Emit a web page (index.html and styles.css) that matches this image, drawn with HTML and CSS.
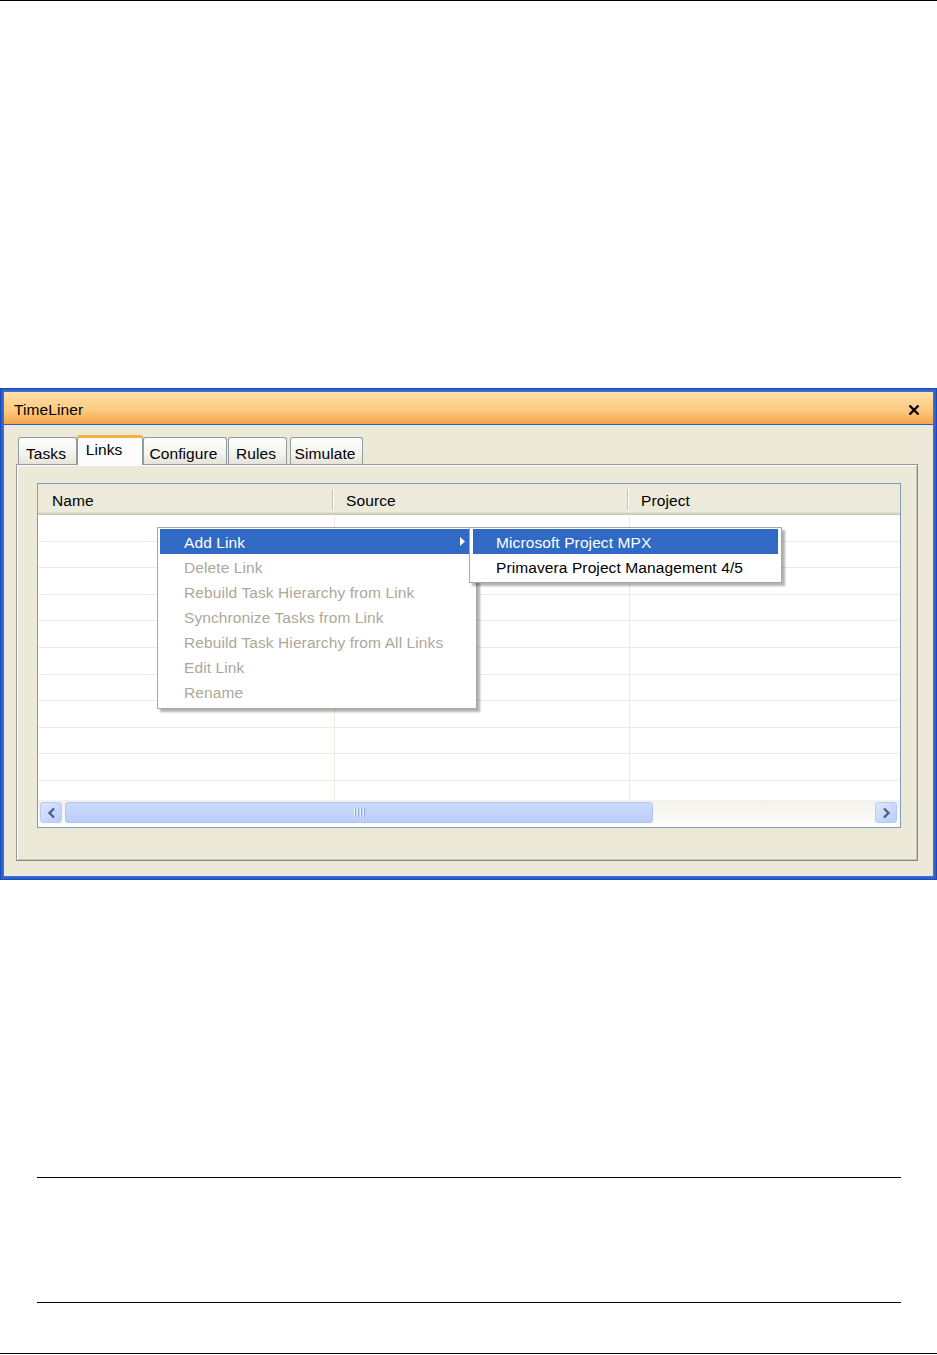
FILE: index.html
```html
<!DOCTYPE html>
<html>
<head>
  <meta charset="UTF-8">
  <title>TimeLiner - Links</title>
  <link rel="stylesheet" href="styles.css">
</head>
<body>
  <div class="page-rule"></div>

  <div class="figure">
    <div class="window">
      <div class="titlebar">
        <span class="title">TimeLiner</span>
        <svg class="close" width="12" height="12" viewBox="0 0 12 12">
          <path d="M1.5 1.5 L10.5 10.5 M10.5 1.5 L1.5 10.5" stroke="#000" stroke-width="2.4" fill="none"/>
        </svg>
      </div>

      <div class="win-body">
        <div class="tabs">
          <div class="tab tab-tasks">Tasks</div>
          <div class="tab tab-links active">Links</div>
          <div class="tab tab-configure">Configure</div>
          <div class="tab tab-rules">Rules</div>
          <div class="tab tab-simulate">Simulate</div>
        </div>

        <div class="tab-panel">
          <div class="listview">
            <div class="lv-header">
              <div class="lv-col col-name">Name</div>
              <div class="lv-col col-source">Source</div>
              <div class="lv-col col-project">Project</div>
            </div>

            <div class="lv-body">
              <div class="lv-row"><div></div><div></div><div></div></div>
              <div class="lv-row"><div></div><div></div><div></div></div>
              <div class="lv-row"><div></div><div></div><div></div></div>
              <div class="lv-row"><div></div><div></div><div></div></div>
              <div class="lv-row"><div></div><div></div><div></div></div>
              <div class="lv-row"><div></div><div></div><div></div></div>
              <div class="lv-row"><div></div><div></div><div></div></div>
              <div class="lv-row"><div></div><div></div><div></div></div>
              <div class="lv-row"><div></div><div></div><div></div></div>
              <div class="lv-row"><div></div><div></div><div></div></div>
              <div class="lv-row"><div></div><div></div><div></div></div>
            </div>

            <div class="hscroll">
              <div class="sb-btn">
                <svg width="9" height="12" viewBox="0 0 9 12"><path d="M7 1.5 L2.5 6 L7 10.5" stroke="#4D6185" stroke-width="2.4" fill="none"/></svg>
              </div>
              <div class="sb-thumb">
                <svg width="12" height="9" viewBox="0 0 12 9">
                  <path d="M1.5 0 V9 M4.5 0 V9 M7.5 0 V9 M10.5 0 V9" stroke="#EEF3FF" stroke-width="1"/>
                  <path d="M2.5 0 V9 M5.5 0 V9 M8.5 0 V9 M11.5 0 V9" stroke="#8CA8E8" stroke-width="1"/>
                </svg>
              </div>
              <div class="sb-track"></div>
              <div class="sb-btn">
                <svg width="9" height="12" viewBox="0 0 9 12"><path d="M2 1.5 L6.5 6 L2 10.5" stroke="#4D6185" stroke-width="2.4" fill="none"/></svg>
              </div>
            </div>

            <!-- context menu opened over the list -->
            <div class="ctx-menu">
              <div class="menu-item highlight">Add Link
                <svg class="sub-arrow" width="5" height="9" viewBox="0 0 5 9"><path d="M0 0 L5 4.5 L0 9 Z" fill="#fff"/></svg>
              </div>
              <div class="menu-item">Delete Link</div>
              <div class="menu-item">Rebuild Task Hierarchy from Link</div>
              <div class="menu-item">Synchronize Tasks from Link</div>
              <div class="menu-item">Rebuild Task Hierarchy from All Links</div>
              <div class="menu-item">Edit Link</div>
              <div class="menu-item">Rename</div>
            </div>

            <div class="ctx-menu submenu">
              <div class="menu-item highlight">Microsoft Project MPX</div>
              <div class="menu-item enabled">Primavera Project Management 4/5</div>
            </div>
          </div>
        </div>
      </div>
    </div>
  </div>

  <div class="footer">
    <div class="rule"></div>
    <div class="rule"></div>
  </div>

  <div class="page-rule bottom"></div>
</body>
</html>
```

FILE: styles.css
```css
body {
  margin: 0;
  background: #ffffff;
  font-family: 'Liberation Sans', Arial, sans-serif;
  color: #000000;
}

.page-rule {
  height: 1px;
  background: #000000;
}

.page-rule.bottom {
  margin-top: 50px;
}

.figure {
  margin-top: 387px;
}

/* XP style window frame */
.window {
  height: 492px;
  box-sizing: border-box;
  border: 1px solid #1B49B3;
  padding: 3px;
  background: #3C70D9;
  box-shadow: inset 0 0 0 2px #2E62D2;
}

.titlebar {
  height: 33px;
  box-sizing: border-box;
  border-bottom: 1px solid #2C5CC6;
  background: linear-gradient(to bottom, #FFE0A6, #FDCB82 55%, #F6A44A);
  display: flex;
  align-items: center;
  justify-content: space-between;
  padding: 3px 13px 0 10px;
  font-size: 15.5px;
  letter-spacing: 0.1px;
}

.win-body {
  height: 451px;
  box-sizing: border-box;
  background: #ECE9D8;
  padding: 10px 15px 0 12px;
}

.tabs {
  display: flex;
  align-items: flex-end;
  height: 29px;
  padding-left: 2px;
}

.tab {
  height: 27px;
  box-sizing: border-box;
  border: 1px solid #919B9C;
  border-bottom: none;
  border-radius: 3px 3px 0 0;
  background: linear-gradient(to bottom, #FFFFFF, #F4F3EE 60%, #E5E3D9);
  font-size: 15.5px;
  letter-spacing: 0.1px;
  text-align: center;
  padding: 7px 3px 0 0;
}

.tab.active {
  height: 30px;
  margin-bottom: -1px;
  position: relative;
  z-index: 1;
  background: #FCFCFE;
  border-top: 3px solid #F7B23C;
  padding: 3px 12px 0 0;
}

.tab-tasks { width: 59px; }
.tab-links { width: 66px; }
.tab-configure { width: 84px; }
.tab-rules { width: 59px; margin-left: 1px; }
.tab-simulate { width: 73px; margin-left: 3px; }

.tab-panel {
  height: 397px;
  box-sizing: border-box;
  border: 1px solid #919B9C;
  border-right-color: #7E8687;
  border-bottom-color: #7E8687;
  background: #ECE9D8;
  box-shadow: inset 1px 1px 0 #FFFFFF, inset -1px -1px 0 #C9C6B6;
  padding: 18px 0 0 20px;
}

.listview {
  position: relative;
  width: 864px;
  height: 345px;
  box-sizing: border-box;
  border: 1px solid #7F9DB9;
  background: #ffffff;
}

.lv-header {
  display: flex;
  height: 31px;
  box-sizing: border-box;
  background: #EBEADB;
  box-shadow: inset 0 -1px 0 #CBC7B8, inset 0 -2px 0 #D6D2C2, inset 0 -3px 0 #E2DECD;
  font-size: 15.5px;
  letter-spacing: 0.1px;
}

.lv-col {
  position: relative;
  display: flex;
  align-items: center;
  padding: 3px 0 0 14px;
  box-sizing: border-box;
}

.col-name { width: 294px; }
.col-source { width: 295px; }
.col-project { flex: 1; }

.lv-col + .lv-col::before {
  content: '';
  position: absolute;
  left: 0;
  top: 5px;
  bottom: 5px;
  width: 1px;
  background: #C7C5B2;
  box-shadow: 1px 0 0 #FFFFFF;
}

.lv-body {
  height: 285px;
  overflow: hidden;
}

.lv-row {
  display: grid;
  grid-template-columns: 297px 295px 1fr;
  height: 26.6px;
  box-sizing: border-box;
  border-bottom: 1px solid #EEEBDD;
}

.lv-row div {
  border-right: 1px solid #EEEBDD;
}

.lv-row div:last-child {
  border-right: none;
}

.hscroll {
  display: flex;
  height: 27px;
  box-sizing: border-box;
  padding: 2px 3px 4px 2px;
  background: linear-gradient(to bottom, #F3F1EC, #FEFEFB);
}

.sb-btn {
  width: 22px;
  height: 21px;
  box-sizing: border-box;
  border: 1px solid #B7CAF5;
  border-radius: 3px;
  background: linear-gradient(135deg, #DCE6FF, #B9CCF9);
  display: flex;
  align-items: center;
  justify-content: center;
}

.sb-thumb {
  width: 588px;
  height: 21px;
  margin-left: 3px;
  box-sizing: border-box;
  border: 1px solid #B2C5F2;
  border-radius: 3px;
  background: linear-gradient(to bottom, #CDDAFD, #BACDFA);
  display: flex;
  align-items: center;
  justify-content: center;
}

.sb-track {
  flex: 1;
}

/* popup menus */
.ctx-menu {
  position: absolute;
  left: 119px;
  top: 43px;
  width: 320px;
  box-sizing: border-box;
  border: 1px solid #ACA899;
  background: #ffffff;
  padding: 1px 3px 4px 2px;
  box-shadow: 3px 3px 2px rgba(0, 0, 0, 0.3);
  font-size: 15.5px;
  letter-spacing: 0.1px;
  z-index: 2;
}

.menu-item {
  position: relative;
  height: 25px;
  box-sizing: border-box;
  display: flex;
  align-items: center;
  padding: 2px 0 0 24px;
  color: #ACA899;
  white-space: nowrap;
}

.menu-item.highlight {
  background: #316AC5;
  color: #ffffff;
}

.menu-item.enabled {
  color: #000000;
}

.sub-arrow {
  position: absolute;
  right: 8px;
  top: 8px;
}

.submenu {
  left: 431px;
  top: 43px;
  width: 313px;
  padding: 1px 3px 3px 3px;
  z-index: 3;
}

.submenu .menu-item {
  padding-left: 23px;
}

.footer {
  margin-top: 297px;
}

.rule {
  height: 1px;
  background: #000000;
  margin: 0 36px 0 37px;
}

.rule + .rule {
  margin-top: 124px;
}
```
